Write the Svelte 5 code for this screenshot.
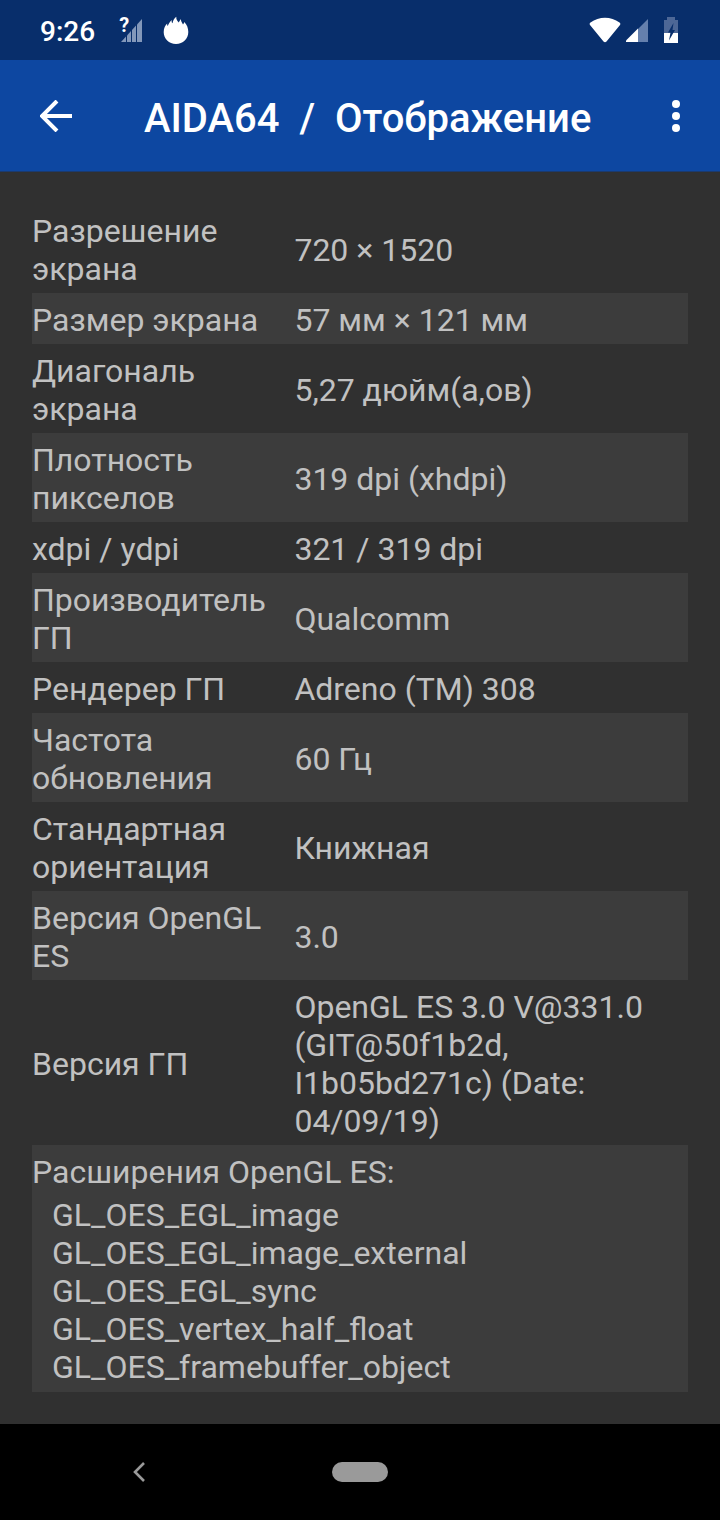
<script lang="ts">
    interface Row {
        label: string;
        value: string;
    }

    const rows: Row[] = [
        { label: "Разрешение экрана", value: "720 × 1520" },
        { label: "Размер экрана", value: "57 мм × 121 мм" },
        { label: "Диагональ экрана", value: "5,27 дюйм(а,ов)" },
        { label: "Плотность пикселов", value: "319 dpi (xhdpi)" },
        { label: "xdpi / ydpi", value: "321 / 319 dpi" },
        { label: "Производитель ГП", value: "Qualcomm" },
        { label: "Рендерер ГП", value: "Adreno (TM) 308" },
        { label: "Частота обновления", value: "60 Гц" },
        { label: "Стандартная ориентация", value: "Книжная" },
        { label: "Версия OpenGL ES", value: "3.0" },
        {
            label: "Версия ГП",
            value: "OpenGL ES 3.0 V@331.0 (GIT@50f1b2d, I1b05bd271c) (Date: 04/09/19)",
        },
    ];

    const extensions: string[] = [
        "GL_OES_EGL_image",
        "GL_OES_EGL_image_external",
        "GL_OES_EGL_sync",
        "GL_OES_vertex_half_float",
        "GL_OES_framebuffer_object",
    ];
</script>

<div class="screen">
    <div class="status">
        <span class="time">9:26</span>
        <div class="signal">
            <svg width="24" height="28" viewBox="0 0 24 28">
                <g fill="#8398ba">
                    <path d="M2 26L7 20.500V26Z" />
                    <path d="M8 19.500L12 15V26H8Z" />
                    <path d="M13 14L17 9.500V26H13Z" />
                    <path d="M18 8.500L23 3V26H18Z" />
                </g>
            </svg>
            <span class="unknown">?</span>
        </div>
        <svg width="26" height="28" viewBox="0 0 26 28">
            <path
                fill="#fff"
                d="M13 28C6 28 .7 22.700 .7 16.200C.7 12.300 2.300 9.300 4.200 7.600C4 8.700 4.300 9.500 4.800 10C5.600 7.500 7 5.500 8.700 4C8.500 5.500 8.700 6.600 9.500 7.200C10 4.500 11.300 2.300 13.300 .8C13 3.500 14.300 4.600 15.800 6.500C16.400 5.300 17.300 3.800 18 3C17.700 5 19 6.500 20 8.500C20.700 7.800 21.200 7 21.300 6C24 8.700 25.300 12 25.300 16C25.300 22.700 20 28 13 28Z"
            />
        </svg>
        <div class="system">
            <svg width="32" height="28" viewBox="0 0 32 28">
                <path
                    fill="#fff"
                    d="M1 9C.3 8 .6 7.200 1.500 6.500C10 .2 22 .2 30.500 6.500C31.400 7.200 31.700 8 31 9L17.500 25.500C16.600 26.600 15.400 26.600 14.500 25.500Z"
                />
            </svg>
            <svg width="24" height="28" viewBox="0 0 24 28">
                <path fill="#6580ad" d="M12 14L23 3V26H12Z" />
                <path fill="#fff" d="M1 26V24.500L13 12.500V26Z" />
            </svg>
            <svg width="16" height="28" viewBox="0 0 16 28">
                <path fill="#4d6796" d="M4 1H12V4H15V17H1V4H4Z" />
                <path fill="#fff" d="M1 17H15V27H1Z" />
                <path fill="#082e6b" d="M10.500 7L5 16.500H7.500L6 24.500L12 14H9.500Z" />
            </svg>
        </div>
    </div>

    <header>
        <button aria-label="Назад">
            <svg width="32" height="32" viewBox="0 0 32 32">
                <path
                    d="M32 16H3M17 1L2 16L17 31"
                    fill="none"
                    stroke="#fff"
                    stroke-width="4"
                />
            </svg>
        </button>
        <h1>AIDA64&nbsp; /&nbsp; Отображение</h1>
        <button aria-label="Меню">
            <svg width="8" height="32" viewBox="0 0 8 32">
                <g fill="#fff">
                    <circle cx="4" cy="4" r="4" />
                    <circle cx="4" cy="16" r="4" />
                    <circle cx="4" cy="28" r="4" />
                </g>
            </svg>
        </button>
    </header>

    <main>
        <table>
            <tbody>
                {#each rows as row}
                    <tr>
                        <th scope="row">{row.label}</th>
                        <td>{row.value}</td>
                    </tr>
                {/each}
                <tr>
                    <td colspan="2">
                        <p>Расширения OpenGL ES:</p>
                        <ul>
                            {#each extensions as extension}
                                <li>{extension}</li>
                            {/each}
                        </ul>
                    </td>
                </tr>
            </tbody>
        </table>
    </main>

    <nav>
        <button aria-label="Назад">
            <svg width="12" height="20" viewBox="0 0 12 20">
                <path
                    d="M11 1L2 10L11 19"
                    fill="none"
                    stroke="#9a9a9a"
                    stroke-width="2.600"
                />
            </svg>
        </button>
        <button aria-label="Главный экран"><span class="pill"></span></button>
    </nav>
</div>

<style>
    :global(body) {
        margin: 0;
        background-color: #303030;
    }

    .screen {
        min-height: 100vh;
        display: flex;
        flex-direction: column;
        background-color: #303030;
        color: #c1c1c1;
        font-family: Roboto, "Noto Sans", sans-serif;
    }

    /* Status bar */
    .status {
        height: 60px;
        padding: 0 41px 0 40px;
        box-sizing: border-box;
        display: flex;
        align-items: center;
        background-color: #082e6b;
        color: #fff;
    }

    .time {
        margin-right: 24px;
        padding-top: 3px;
        font-size: 28px;
        font-weight: 500;
        line-height: 32px;
    }

    .signal {
        position: relative;
        height: 28px;
        margin-right: 20px;
    }

    .unknown {
        position: absolute;
        top: 1px;
        left: 0;
        font-size: 20px;
        font-weight: 700;
        line-height: 16px;
    }

    .system {
        margin-left: auto;
        display: flex;
        align-items: center;
        gap: 4px;
    }

    .system svg:last-child {
        margin-left: 10px;
    }

    /* Title bar */
    header {
        height: 112px;
        padding: 0 40px;
        box-sizing: border-box;
        display: flex;
        align-items: center;
        background-color: #0d47a1;
        border-bottom: 1px solid #1b3a6e;
        color: #fff;
    }

    h1 {
        flex: 1;
        margin: 0;
        padding: 6px 0 0 72px;
        font-size: 40px;
        font-weight: 500;
        line-height: 48px;
        white-space: nowrap;
    }

    button {
        display: flex;
        padding: 0;
        border: none;
        background: none;
        cursor: pointer;
    }

    svg {
        display: block;
    }

    /* Table */
    main {
        flex: 1;
        padding: 32px;
        font-size: 32px;
        line-height: 38px;
    }

    table {
        width: 100%;
        table-layout: fixed;
        border-collapse: collapse;
    }

    tr:nth-child(even) {
        background-color: #3c3c3c;
    }

    th,
    td {
        padding: 8px 0 5px;
        font-weight: 400;
        text-align: left;
        vertical-align: middle;
    }

    th {
        width: 40%;
    }

    p {
        margin: 0;
    }

    ul {
        margin: 5px 0 0;
        padding: 0 0 1px 20px;
        list-style: none;
    }

    /* System navigation */
    nav {
        height: 96px;
        padding: 0 28px;
        display: grid;
        grid-template-columns: repeat(3, 1fr);
        align-items: center;
        justify-items: center;
        background-color: #000;
    }

    .pill {
        width: 56px;
        height: 20px;
        border-radius: 10px;
        background-color: #9a9a9a;
    }
</style>
